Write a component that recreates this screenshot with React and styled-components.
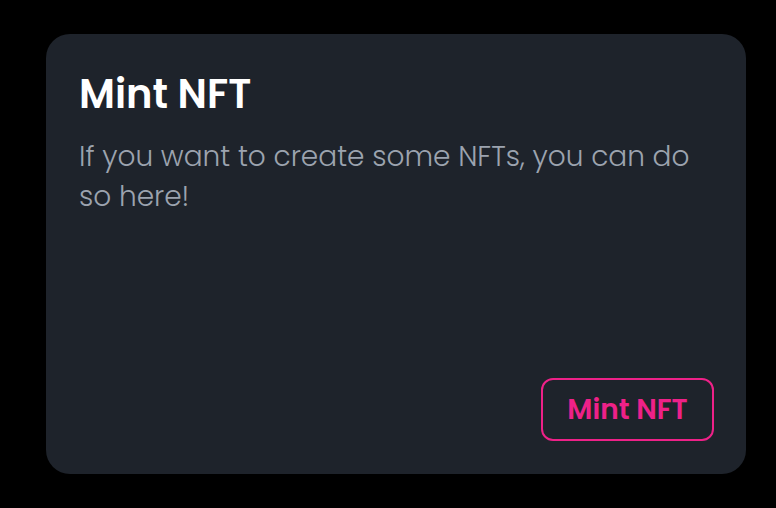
import React from "react";
import styled, { createGlobalStyle } from "styled-components";

const GlobalStyle = createGlobalStyle`
  html, body {
    margin: 0;
    padding: 0;
    background: #000000;
  }
  body {
    font-family: "Poppins", Inter, "Open Sans", sans-serif;
  }
`;

export default function App() {
  return (
    <>
      <GlobalStyle />
      <Page>
        <Card>
          <Title>Mint NFT</Title>
          <Description>
            If you want to create some NFTs, you can do so here!
          </Description>
          <Footer>
            <MintButton>Mint NFT</MintButton>
          </Footer>
        </Card>
      </Page>
    </>
  );
}

const Page = styled.div`
  width: 776px;
  height: 508px;
  padding: 34px 30px 34px 46px;
  box-sizing: border-box;
`;

const Card = styled.div`
  width: 700px;
  height: 440px;
  box-sizing: border-box;
  background-color: #1e232b;
  border-radius: 24px;
  padding: 32px 32px 33px 33px;
  display: flex;
  flex-direction: column;
`;

const Title = styled.h2`
  margin: 0;
  color: #ffffff;
  font-size: 40px;
  font-weight: 600;
  line-height: 56px;
`;

const Description = styled.p`
  margin: 15px 0 0;
  width: 630px;
  color: #9ca3af;
  font-size: 28px;
  font-weight: 300;
  line-height: 40px;
`;

const Footer = styled.div`
  margin-top: auto;
  display: flex;
  justify-content: flex-end;
`;

const MintButton = styled.button`
  width: 173px;
  height: 63px;
  box-sizing: border-box;
  background: transparent;
  border: 2px solid #ee2188;
  border-radius: 12px;
  color: #ee2188;
  font-family: "Poppins", Inter, "Open Sans", sans-serif;
  font-size: 28px;
  font-weight: 600;
  cursor: pointer;
`;
